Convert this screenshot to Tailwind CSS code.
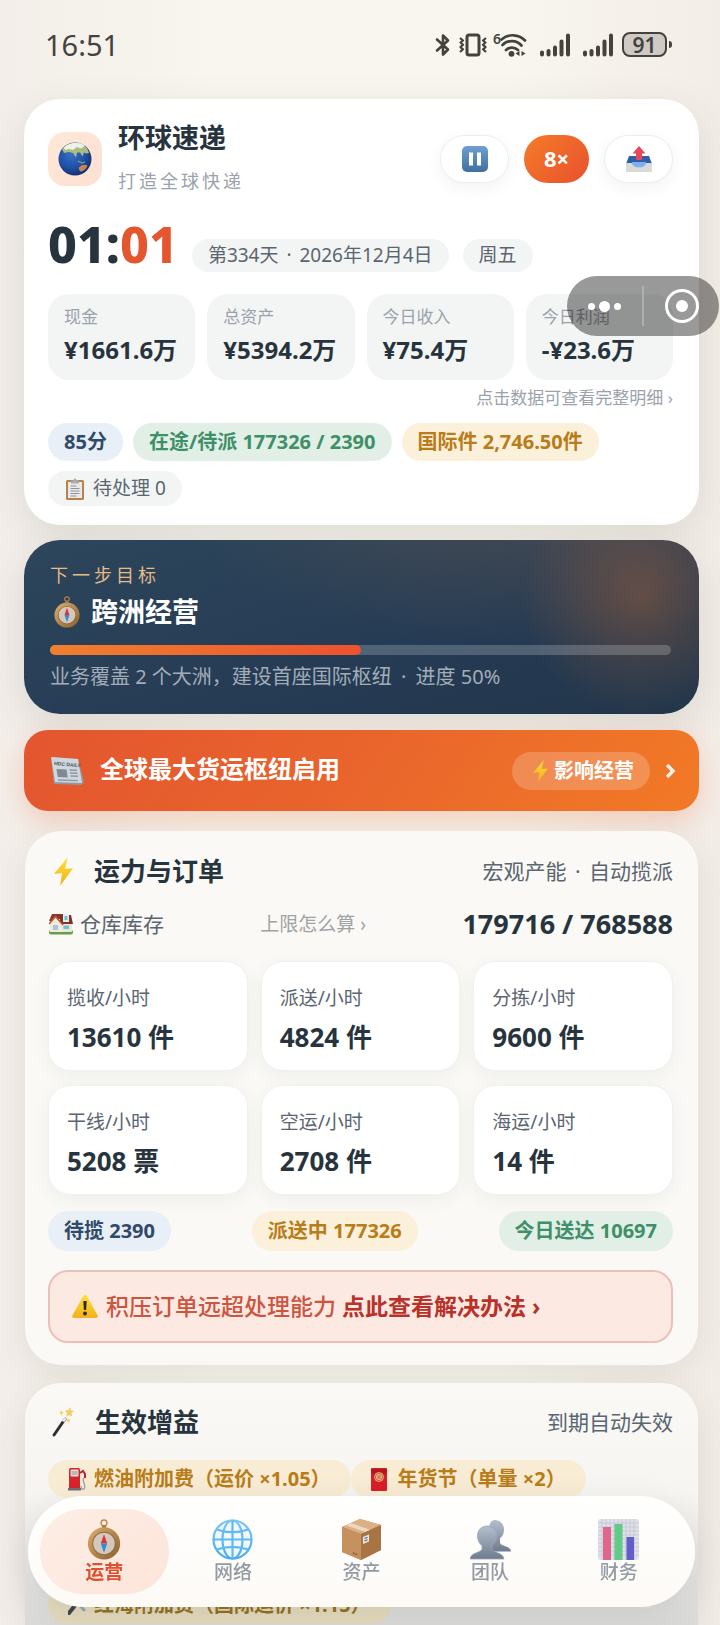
<!DOCTYPE html>
<html lang="zh-CN">
<head>
<meta charset="utf-8">
<meta name="viewport" content="width=device-width, initial-scale=1">
<title>环球速递</title>
<script src="https://cdn.jsdelivr.net/npm/@tailwindcss/browser@4"></script>
</head>
<body class="font-['Noto_Sans','Noto_Sans_CJK_SC',sans-serif] text-[#27343d] bg-[#f5f2ec]">

<svg class="absolute size-0" aria-hidden="true">
  <defs>
    <linearGradient id="gold" x1="0" y1="0" x2="1" y2="1"><stop offset="0" stop-color="#dcae6c"/><stop offset="1" stop-color="#8c5f2c"/></linearGradient>
    <radialGradient id="sea" cx=".4" cy=".35" r=".7"><stop offset="0" stop-color="#3572c4"/><stop offset=".6" stop-color="#1f4fa6"/><stop offset="1" stop-color="#122c66"/></radialGradient>
    <linearGradient id="blue" x1="0" y1="0" x2="0" y2="1"><stop offset="0" stop-color="#6f9fd0"/><stop offset="1" stop-color="#40709f"/></linearGradient>
    <linearGradient id="bolt" x1="0" y1="0" x2="0" y2="1"><stop offset="0" stop-color="#ffdf35"/><stop offset="1" stop-color="#f2b01c"/></linearGradient>
    <linearGradient id="sky" x1="0" y1="0" x2="0" y2="1"><stop offset="0" stop-color="#79c6f5"/><stop offset="1" stop-color="#4aaaf0"/></linearGradient>
    <linearGradient id="person" x1="0" y1="0" x2="0" y2="1"><stop offset="0" stop-color="#b3bfcd"/><stop offset="1" stop-color="#6f7c8d"/></linearGradient>
    <symbol id="compass" viewBox="0 0 34 42">
      <circle cx="17" cy="4" r="3" fill="none" stroke="#b98a4c" stroke-width="1.4"/>
      <rect x="15" y="6.500" width="4" height="3" fill="#a87a3e"/>
      <circle cx="17" cy="25" r="16.500" fill="url(#gold)"/>
      <circle cx="17" cy="25" r="12" fill="#8d6a43"/>
      <circle cx="17" cy="25" r="11" fill="#d3c8bb"/>
      <path d="M17 15.500l3.300 9.500h-6.600z" fill="#d8343a"/>
      <path d="M17 34.500l3.300-9.500h-6.600z" fill="#2f8fd0"/>
    </symbol>
    <symbol id="boltshape" viewBox="0 0 20 30">
      <path d="M14.500 0L0 17.500l8.500-.8L6.500 30 20 11.500l-8.500.8z" fill="url(#bolt)"/>
    </symbol>
  </defs>
</svg>

<div class="relative min-h-screen flex flex-col overflow-hidden bg-[linear-gradient(90deg,#f3eee9,#f8f6ee_30%,#f8f6ee_70%,#f3ede7)]">

  <header class="flex items-center justify-between pt-6 pl-[45px] pr-12 h-[84px] pb-[19px] text-[#45423e]">
    <time class="text-[29px] leading-10">16:51</time>
    <div class="flex items-center">
      <svg class="w-4 h-6" viewBox="0 0 16 24" fill="none" stroke="currentColor" stroke-width="2.600" stroke-linejoin="round" stroke-linecap="round"><path d="M2 6.500l11 10-5 5V2.500l5 5-11 10"/></svg>
      <svg class="ml-2 w-7 h-6" viewBox="0 0 28 24" fill="none" stroke="currentColor" stroke-width="3" stroke-linejoin="round"><rect x="8" y="2" width="12" height="20" rx="2"/><g stroke-width="2.200"><path d="M1 5l3 2.500-2.500 2 2.500 2.300-2.500 2.300 2.500 2.200L1 19"/><path d="M27 5l-3 2.500 2.500 2-2.500 2.300 2.500 2.300-2.500 2.200L27 19"/></g></svg>
      <div class="ml-1.5 flex items-start h-6">
        <span class="text-[14px] leading-3 font-semibold">6</span>
        <svg class="-ml-px w-7 h-6" viewBox="7 0 28 24" fill="none" stroke="currentColor" stroke-width="2.700" stroke-linecap="round"><path d="M8.500 6.500a17 17 0 0 1 23.500 1"/><path d="M9.500 12a13 13 0 0 1 19 .5"/><path d="M13 17a9 9 0 0 1 12 0"/><circle cx="18.500" cy="20.800" r="2.900" fill="currentColor" stroke="none"/><path d="M26.500 18v5L22.500 20.500zM28.500 18v5l4-2.500z" fill="currentColor" stroke="none"/></svg>
      </div>
      <svg class="ml-3 w-[30px] h-6" viewBox="0 0 30 24" stroke="currentColor" stroke-width="4" stroke-linecap="round"><path d="M2 19.500v2M8.500 18v3.500M15 14.500v7M21.500 8.500v13M28 2.500v19"/></svg>
      <svg class="ml-[13px] w-[30px] h-6" viewBox="0 0 30 24" stroke="currentColor" stroke-width="4" stroke-linecap="round"><path d="M2 19.500v2M8.500 18v3.500M15 14.500v7M21.500 8.500v13M28 2.500v19"/></svg>
      <div class="ml-[9px] flex items-center">
        <div class="w-[45px] h-[25px] rounded-lg border-2 border-current bg-[#cfcbc4] flex items-center justify-center text-[21px] leading-5 font-semibold">91</div>
        <div class="ml-0.5 w-[3px] h-[7px] rounded-r-sm bg-current"></div>
      </div>
    </div>
  </header>

  <main class="flex-1 flex flex-col pl-6 pr-[21px] pt-[15px]">

    <section class="rounded-[36px] bg-white pl-6 pr-[26px] pt-6 pb-[19px] shadow-[0_12px_40px_rgba(60,60,50,0.12)]">
      <div class="flex items-center">
        <div class="size-[54px] rounded-[17px] bg-[linear-gradient(135deg,#ffe8d8,#fde0d2)] flex items-center justify-center">
          <svg class="size-[34px]" viewBox="0 0 34 34" aria-hidden="true"><circle cx="17" cy="17" r="16.500" fill="url(#sea)"/><path d="M4 7C9 0 22-1 29 6l2 5-3 .5-2-1-1.500 4-2.500-4-3 0-1 5-3-4.500-4-1-5 1z" fill="#a9bd80"/><path d="M6 5.500C12-.5 22-.5 27 4l-4 2.500-4-1.500-4 3-4-1-4 1z" fill="#eef1e6"/><path d="M21 25.500c2-2.500 6-3.500 8.500-2-1 3-3 5-6 6-2 0-3-2-2.500-4z" fill="#c9825a"/><path d="M20 19l4 2 3-1" stroke="#87a071" stroke-width="1.200" fill="none"/></svg>
        </div>
        <div class="ml-4 flex-1 flex flex-col gap-3.5">
          <h1 class="text-[27px] leading-[30px] font-bold">环球速递</h1>
          <p class="text-lg leading-7 tracking-[3px] text-[#9aa2ab]">打造全球快递</p>
        </div>
        <div class="flex gap-[15px]">
          <button type="button" aria-label="暂停" class="w-[69px] h-12 rounded-3xl bg-white border border-[#eceeee] shadow-[0_5px_16px_rgba(40,50,60,0.06)] flex items-center justify-center">
            <svg class="size-[26px]" viewBox="0 0 26 26"><rect width="26" height="26" rx="5" fill="url(#blue)"/><path d="M7 6.500h4v13H7zM15 6.500h4v13h-4z" fill="#fff"/></svg>
          </button>
          <button type="button" class="w-[65px] h-12 rounded-3xl bg-[linear-gradient(135deg,#f57c28,#e8502e)] text-white font-bold text-[22px] leading-8 pb-0.5">8×</button>
          <button type="button" aria-label="导出" class="w-[69px] h-12 rounded-3xl bg-white border border-[#eceeee] shadow-[0_5px_16px_rgba(40,50,60,0.06)] flex items-center justify-center">
            <svg class="size-[26px]" viewBox="0 0 26 26"><path d="M3 10h20l3 8H0z" fill="#2f5ea8"/><path d="M0 17h6c1 3 4 4.500 7 4.500s6-1.500 7-4.500h6v9H0z" fill="#dcdad8"/><path d="M6 16h14c0 4-3 5.500-7 5.500S6 20 6 16z" fill="#7fb0ea"/><path d="M13 0l6.500 7.500H16V14h-6V7.500H6.500z" fill="#e5485a"/></svg>
          </button>
        </div>
      </div>

      <div class="mt-[22px] flex items-end">
        <div class="text-[50px] leading-[55px] font-extrabold">01:<span class="text-[#e4572e]">01</span></div>
        <div class="ml-3.5 h-[33px] rounded-full bg-[#f3f5f5] px-4 text-[19px] leading-8 text-[#5a6570]">第334天<span class="mx-[3px]"> · </span>2026年12月4日</div>
        <div class="ml-3.5 h-[33px] rounded-full bg-[#f3f5f5] px-4 text-[19px] leading-8 text-[#5a6570]">周五</div>
      </div>

      <div class="mt-[22px] grid grid-cols-4 gap-3">
        <button type="button" class="rounded-[21px] bg-[#f3f5f5] pl-4 pt-2.5 pb-3.5 text-left flex flex-col gap-1"><span class="text-[17px] leading-[26px] text-[#9aa2ab]">现金</span><span class="text-2xl leading-8 font-bold whitespace-nowrap">¥1661.6万</span></button>
        <button type="button" class="rounded-[21px] bg-[#f3f5f5] pl-4 pt-2.5 pb-3.5 text-left flex flex-col gap-1"><span class="text-[17px] leading-[26px] text-[#9aa2ab]">总资产</span><span class="text-2xl leading-8 font-bold whitespace-nowrap">¥5394.2万</span></button>
        <button type="button" class="rounded-[21px] bg-[#f3f5f5] pl-4 pt-2.5 pb-3.5 text-left flex flex-col gap-1"><span class="text-[17px] leading-[26px] text-[#9aa2ab]">今日收入</span><span class="text-2xl leading-8 font-bold whitespace-nowrap">¥75.4万</span></button>
        <button type="button" class="rounded-[21px] bg-[#f3f5f5] pl-4 pt-2.5 pb-3.5 text-left flex flex-col gap-1"><span class="text-[17px] leading-[26px] text-[#9aa2ab]">今日利润</span><span class="text-2xl leading-8 font-bold whitespace-nowrap">-¥23.6万</span></button>
      </div>
      <p class="mt-[5px] text-right text-[17px] leading-[26px] text-[#9aa2ab]">点击数据可查看完整明细 ›</p>

      <div class="mt-3 flex flex-wrap gap-2.5 text-xl">
        <span class="rounded-full bg-[#e9eff6] px-4 leading-[38px] font-bold text-[#304a6b]">85分</span>
        <span class="rounded-full bg-[#e1efe7] px-4 leading-[38px] font-bold text-[#3f8f69]">在途/待派 177326 / 2390</span>
        <span class="rounded-full bg-[#fbf0da] px-4 leading-[38px] font-bold text-[#b97c18]">国际件 2,746.50件</span>
        <span class="rounded-full bg-[#f3f5f5] px-4 leading-[35px] text-[19px] text-[#5a6570] flex items-center">
          <svg class="ml-0.5 mr-[9px] w-[18px] h-[22px]" viewBox="0 0 18 22" aria-hidden="true"><rect y="2" width="18" height="20" rx="1.500" fill="#b9824a"/><rect x="2" y="4" width="14" height="16" fill="#e9e9e9"/><path d="M5 2.500h2L9 0l2 2.500h2v3H5z" fill="#a6adb3"/><path d="M4.500 8h6M4.500 10.500h9M4.500 13h9M4.500 15.500h9M4.500 18h6" stroke="#8e9499" stroke-width="1"/></svg>待处理 0</span>
      </div>
    </section>

    <section class="mt-[15px] rounded-[36px] pl-[26px] pr-7 pt-[22px] pb-[23px] text-white bg-[radial-gradient(circle_at_617px_55px,rgba(240,120,40,0.28),rgba(240,120,40,0)_120px),radial-gradient(ellipse_at_72%_-10%,rgba(240,140,60,0.13),transparent_45%),linear-gradient(160deg,#2d465b,#263c55_55%,#22364a)] shadow-[0_12px_40px_rgba(60,60,50,0.14)]">
      <p class="text-lg leading-[26px] tracking-[4px] text-[#e9b98a]">下一步目标</p>
      <h2 class="mt-1.5 flex items-center text-[27px] leading-9 font-bold"><svg class="ml-1 mr-[11px] w-[26px] h-8" aria-hidden="true"><use href="#compass"/></svg>跨洲经营</h2>
      <div class="mt-[15px] h-2.5 rounded-full bg-white/20" role="progressbar" aria-valuenow="50" aria-valuemin="0" aria-valuemax="100" aria-label="进度">
        <div class="h-full rounded-full bg-[linear-gradient(90deg,#f0802e,#ec522f)]" style="width:50%"></div>
      </div>
      <p class="mt-2 text-xl leading-7 text-[#a3adb8]">业务覆盖 2 个大洲，建设首座国际枢纽<span class="mx-1"> · </span>进度 50%</p>
    </section>

    <a href="#news" class="mt-4 h-[81px] rounded-3xl pl-[27px] pr-6 flex items-center text-white bg-[linear-gradient(125deg,#e3552f,#e9652c_50%,#f27a26)] shadow-[0_10px_28px_rgba(230,90,45,0.25)]">
      <svg class="w-[33px] h-[30px]" viewBox="0 0 33 30" aria-hidden="true"><path d="M0 1l27 2 6 23-3 3-27-1z" fill="#8f9aa6"/><path d="M0 1l27 2 4 24-27-1z" fill="#cfd6dd"/><text x="3" y="9" font-size="5" font-weight="700" fill="#4b5560" transform="rotate(5 3 9)" font-family="Liberation Sans">HDC DAILY</text><path d="M5.500 13l10 .4 1.300 8-10-.3z" fill="#7e8a96"/><path d="M18.500 14l7.500.3M19 17l7.500.3M19.500 20l7.500.3M7 24l20 .6" stroke="#8d98a3" stroke-width="1.400"/></svg>
      <span class="ml-4 flex-1 pb-1 text-2xl leading-8 font-bold">全球最大货运枢纽启用</span>
      <span class="rounded-full bg-white/20 pl-[21px] pr-4 h-[38px] text-xl leading-9 font-bold flex items-center"><svg class="mr-1.5 w-[15px] h-[22px]" aria-hidden="true"><use href="#boltshape"/></svg>影响经营</span>
      <svg class="ml-4 w-[9px] h-3.5" viewBox="0 0 9 14" fill="none" stroke="#fff" stroke-opacity=".9" stroke-width="3.500" aria-hidden="true"><path d="M1 1l6 6-6 6"/></svg>
    </a>

    <section class="mt-5 mx-px rounded-[36px] bg-[#faf9f6] pl-[23px] pr-[25px] pt-6 pb-[22px] shadow-[0_10px_36px_rgba(60,60,50,0.10)]">
      <div class="flex items-center justify-between">
        <h2 class="flex items-center text-[26px] leading-8 font-bold"><svg class="ml-1.5 mr-[21px] w-[19px] h-[29px]" aria-hidden="true"><use href="#boltshape"/></svg>运力与订单</h2>
        <span class="text-[21px] leading-8 text-[#5a6570]">宏观产能<span class="mx-[3px]"> · </span>自动揽派</span>
      </div>
      <div class="mt-[21px] flex items-center justify-between">
        <span class="flex items-center text-[21px] leading-8 text-[#5a6570]">
          <svg class="ml-px mr-[7px] w-6 h-[22px]" viewBox="0 0 24 22" aria-hidden="true"><rect x="0" y="17" width="24" height="4.500" rx="2" fill="#63a04c"/><path d="M3 1h13l3 7H0z" fill="#8e3527"/><rect x="10" y="6" width="13" height="13" fill="#ece6d8"/><path d="M11 2h11l2 9H11z" fill="#7c3527"/><rect x="14" y="1" width="6" height="8" fill="#e8eef0"/><rect x="15.500" y="3" width="3" height="4" fill="#6fc0d2"/><path d="M6.500 4L13 11v8H1v-8z" fill="#f3ead9"/><path d="M0 11l6.500-7.500L14 12" fill="none" stroke="#b55b42" stroke-width="1.600"/><rect x="4" y="12" width="5" height="5" fill="#a8c7d8"/><rect x="14.500" y="12.500" width="5.500" height="3.500" fill="#6fc0d2"/></svg>仓库库存</span>
        <a href="#limit" class="text-[19px] leading-8 text-[#9fa3a5]">上限怎么算 ›</a>
        <strong class="text-[27px] leading-8 font-bold">179716 / 768588</strong>
      </div>

      <dl class="mt-[21px] grid grid-cols-3 gap-x-[13px] gap-y-3.5">
        <div class="rounded-[22px] bg-white border border-[#f0f1f0] pl-[18px] pt-[23px] pb-[17px] shadow-[0_5px_18px_rgba(50,60,60,0.06)]"><dt class="text-[19px] leading-[26px] text-[#5a6570]">揽收/小时</dt><dd class="mt-2.5 text-[26px] leading-8 font-bold">13610 件</dd></div>
        <div class="rounded-[22px] bg-white border border-[#f0f1f0] pl-[18px] pt-[23px] pb-[17px] shadow-[0_5px_18px_rgba(50,60,60,0.06)]"><dt class="text-[19px] leading-[26px] text-[#5a6570]">派送/小时</dt><dd class="mt-2.5 text-[26px] leading-8 font-bold">4824 件</dd></div>
        <div class="rounded-[22px] bg-white border border-[#f0f1f0] pl-[18px] pt-[23px] pb-[17px] shadow-[0_5px_18px_rgba(50,60,60,0.06)]"><dt class="text-[19px] leading-[26px] text-[#5a6570]">分拣/小时</dt><dd class="mt-2.5 text-[26px] leading-8 font-bold">9600 件</dd></div>
        <div class="rounded-[22px] bg-white border border-[#f0f1f0] pl-[18px] pt-[23px] pb-[17px] shadow-[0_5px_18px_rgba(50,60,60,0.06)]"><dt class="text-[19px] leading-[26px] text-[#5a6570]">干线/小时</dt><dd class="mt-2.5 text-[26px] leading-8 font-bold">5208 票</dd></div>
        <div class="rounded-[22px] bg-white border border-[#f0f1f0] pl-[18px] pt-[23px] pb-[17px] shadow-[0_5px_18px_rgba(50,60,60,0.06)]"><dt class="text-[19px] leading-[26px] text-[#5a6570]">空运/小时</dt><dd class="mt-2.5 text-[26px] leading-8 font-bold">2708 件</dd></div>
        <div class="rounded-[22px] bg-white border border-[#f0f1f0] pl-[18px] pt-[23px] pb-[17px] shadow-[0_5px_18px_rgba(50,60,60,0.06)]"><dt class="text-[19px] leading-[26px] text-[#5a6570]">海运/小时</dt><dd class="mt-2.5 text-[26px] leading-8 font-bold">14 件</dd></div>
      </dl>

      <div class="mt-4 flex justify-between text-xl leading-10 font-bold">
        <span class="rounded-full bg-[#e9eff6] px-4 text-[#304a6b]">待揽 2390</span>
        <span class="rounded-full bg-[#fbf0da] px-4 text-[#b97c18]">派送中 177326</span>
        <span class="rounded-full bg-[#e1efe7] px-4 text-[#3f8f69]">今日送达 10697</span>
      </div>

      <button type="button" class="mt-[19px] w-full h-[73px] rounded-[20px] border-2 border-[#ecc0b8] bg-[#fce9e2] pl-[22px] flex items-center text-[23px] font-medium text-[#cd553f]">
        <svg class="mr-2 w-[26px] h-[23px]" viewBox="0 0 26 23" aria-hidden="true"><path d="M13 0c1 0 1.500.6 2 1.400l10.500 18.800c.8 1.500 0 2.800-1.700 2.800H2.200C.5 23-.3 21.700.5 20.200L11 1.400C11.500.6 12 0 13 0z" fill="url(#bolt)"/><path d="M11.300 6h3.400l-.6 9h-2.200z" fill="#2b2b2b"/><circle cx="13" cy="18.500" r="1.900" fill="#2b2b2b"/></svg>
        <span>积压订单远超处理能力 <strong class="font-bold text-[#b8322a]">点此查看解决办法 ›</strong></span>
      </button>
    </section>

    <section class="mt-[18px] mx-px flex-1 rounded-t-[36px] bg-[linear-gradient(#faf9f6,#f6f5f2_45%,#d9d9d8)] pl-[23px] pr-[25px] pt-[23px] shadow-[0_10px_36px_rgba(60,60,50,0.12)]">
      <div class="flex items-center justify-between">
        <h2 class="flex items-center text-[26px] leading-8 font-bold"><svg class="ml-1 mr-[21px] w-[22px] h-[30px]" viewBox="0 0 22 30" aria-hidden="true"><path d="M2 28L13 12" stroke="#2c2f33" stroke-width="3" stroke-linecap="round"/><path d="M11 14.500l2.500-3.500" stroke="#e8e8e8" stroke-width="3"/><path d="M18 0l1 3.500 3 .2-2.500 2.500.8 3.500-3-1.600-3 1.600.6-3.500L13 3.500l3.500-.5zM9 3l1.200 2L12 5.500l-1.800 1L9.500 9 8.500 6.500 7 5.500l1.700-.5zM16 11l.8 1.600 1.700.4-1.500 1.200-.5 2-1-1.800-1.500-.8 1.500-.8z" fill="#f3cf63"/></svg>生效增益</h2>
        <span class="text-[21px] leading-8 text-[#5a6570]">到期自动失效</span>
      </div>
      <div class="mt-[22px] flex flex-wrap gap-y-[88px] text-xl leading-[38px] font-bold text-[#b97c18]">
        <span class="rounded-full bg-[#f8ecd5] px-5 flex items-center"><svg class="mr-2 w-[18px] h-6" viewBox="0 0 18 24" aria-hidden="true"><rect x="1" y="1" width="11" height="21" rx="1.500" fill="#d9232e"/><rect x="0" y="21" width="13" height="2.500" fill="#6c7076"/><rect x="2.500" y="2.500" width="8" height="7" rx="1" fill="#e7dfd9"/><path d="M3.500 5h6M3.500 7h6" stroke="#8a8f94"/><path d="M12 6l3-2 2 3v4" fill="none" stroke="#c0242e" stroke-width="2"/><path d="M16 11c-3 3 3 7 0 11-2 1-3-1-3-3" fill="none" stroke="#9a9fa5" stroke-width="1.300"/></svg>燃油附加费（运价 ×1.05）</span>
        <span class="rounded-full bg-[#f8ecd5] px-5 flex items-center"><svg class="mr-[11px] w-4 h-[23px]" viewBox="0 0 16 23" aria-hidden="true"><rect width="16" height="23" rx="1" fill="#d81f26"/><path d="M0 4c4 7 12 7 16 0v-3H0z" fill="#b9151d"/><circle cx="8" cy="9" r="4.800" fill="#eebf8c"/><circle cx="8" cy="9" r="3.600" fill="none" stroke="#c9553a" stroke-width="1"/><path d="M6 8h4M6 10h4M8 7v4" stroke="#c9553a" stroke-width=".8"/></svg>年货节（单量 ×2）</span>
        <span class="rounded-full bg-[#e3dabd] px-5 flex items-center text-[#93701f]"><svg class="mr-2 w-[18px] h-5" viewBox="0 0 18 20" aria-hidden="true"><path d="M1 18l8-10" stroke="#3a4654" stroke-width="4" stroke-linecap="round"/><path d="M7 5l9 10" stroke="#8fa3bd" stroke-width="3" stroke-linecap="round"/></svg>红海附加费（国际运价 ×1.15）</span>
      </div>
    </section>
  </main>

  <!-- Floating mini-program controls -->
  <div class="absolute top-[276px] right-px w-[152px] h-[60px] rounded-full bg-black/40 flex items-center">
    <button type="button" aria-label="更多" class="flex-1 h-full flex items-center justify-center gap-1"><span class="size-[7px] rounded-full bg-white"></span><span class="size-[11px] rounded-full bg-white"></span><span class="size-[7px] rounded-full bg-white"></span></button>
    <span class="w-0.5 h-10 bg-white/25"></span>
    <button type="button" aria-label="关闭" class="flex-1 h-full flex items-center justify-center"><span class="size-[34px] rounded-full border-3 border-white flex items-center justify-center"><span class="size-3 rounded-full bg-white"></span></span></button>
  </div>

  <nav class="fixed bottom-[18px] left-7 right-[25px] h-[111px] rounded-full bg-[linear-gradient(#fffffe,#fdfaf6)] px-3 flex items-center shadow-[0_8px_32px_rgba(50,50,50,0.10)] text-[19px] leading-6 font-medium text-[#929ba4]">
    <a href="#ops" aria-current="page" class="flex-1 h-[85px] rounded-[42px] bg-[linear-gradient(135deg,#fdeee5,#fde4da)] flex flex-col items-center pt-2.5 text-[#df4f30] font-bold"><svg class="w-[34px] h-[41px]" aria-hidden="true"><use href="#compass"/></svg>运营</a>
    <a href="#network" class="flex-1 h-[85px] flex flex-col items-center pt-2.5"><svg class="size-[41px]" viewBox="0 0 41 41" fill="#f1f9ff" stroke="url(#sky)" stroke-width="2.200" aria-hidden="true"><circle cx="20.500" cy="20.500" r="19"/><ellipse cx="20.500" cy="20.500" rx="10" ry="19" fill="none"/><path d="M20.500 1.500l.01 38M1.500 20.500l38 .01M5 10.500c9 3.500 22 3.500 31 0M5 30.500c9-3.500 22-3.500 31 0" fill="none" stroke="#62b8f3"/></svg>网络</a>
    <a href="#assets" class="flex-1 h-[85px] flex flex-col items-center pt-2.5"><svg class="size-[41px]" viewBox="0 0 41 41" aria-hidden="true"><path d="M1 8L19 0l21 6v25L20 41 1 33z" fill="#b98354"/><path d="M1 8L19 0l21 6-20 9z" fill="#dcb083"/><path d="M1 8l19 7v26L1 33z" fill="#c4915f"/><path d="M20 15l20-9v25L20 41z" fill="#a87444"/><path d="M5 6.200L24 13l5-2.300L10 4z" fill="#ead8bf"/><path d="M22 18l6-2.500v7L22 25z" fill="#e9e7e4"/><path d="M23.500 19.500l3-1.200M23.500 22l3-1.200" stroke="#4d6288" stroke-width="1.200"/><path d="M12 34l5 2" stroke="#8a6238" stroke-width="2" stroke-dasharray="1.500 1"/></svg>资产</a>
    <a href="#team" class="flex-1 h-[85px] flex flex-col items-center pt-2.5"><svg class="size-[41px]" viewBox="0 0 41 41" fill="url(#person)" aria-hidden="true"><path d="M25 1c5 0 9 4 9 9.500 0 4-1.500 7-4 9v4c0 4 11 3 11 9H19V10c0-5 2-9 6-9z"/><path d="M17 7c5.500 0 9.500 4 9.500 10 0 4-1.800 7.500-4.500 9.500v3.500c1 4 11 3 12 10H0c1-7 11-6 12-10v-3.500C9 24.500 7.500 21 7.500 17 7.500 11 11.500 7 17 7z" stroke="#9aa7b6" stroke-width=".8"/></svg>团队</a>
    <a href="#finance" class="flex-1 h-[85px] flex flex-col items-center pt-2.5"><svg class="size-[41px]" viewBox="0 0 41 41" aria-hidden="true"><rect width="41" height="41" rx="3" fill="#dfe0ea"/><path d="M4 0v41M8 0v41M12 0v41M16 0v41M20 0v41M24 0v41M28 0v41M32 0v41M36 0v41M0 4h41M0 8h41M0 12h41M0 16h41M0 20h41M0 24h41M0 28h41M0 32h41M0 36h41" stroke="#bfc0cf" stroke-width=".7"/><rect x="5" y="8" width="8" height="33" fill="#e0658c"/><rect x="16.500" y="5" width="8" height="36" fill="#62cc86"/><rect x="28.500" y="18" width="7.500" height="23" fill="#645cca"/></svg>财务</a>
  </nav>
</div>
</body>
</html>
